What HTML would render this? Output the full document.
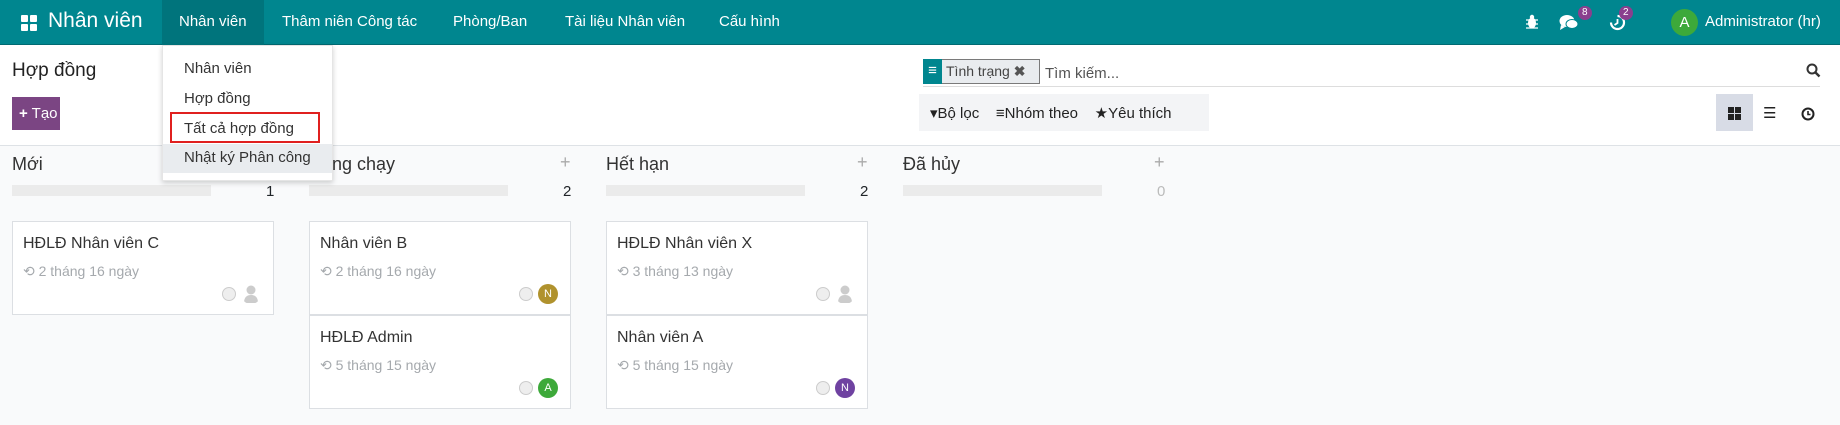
<!DOCTYPE html>
<html><head><meta charset="utf-8"><style>
*{box-sizing:border-box;margin:0;padding:0}
body{width:1840px;height:425px;overflow:hidden;font-family:"Liberation Sans",sans-serif;background:#f9fafb;color:#212529;position:relative}
.a{position:absolute;white-space:nowrap}
.nav{position:absolute;left:0;top:0;width:1840px;height:45px;background:#00868f;border-bottom:1px solid #006a72}
.nav .a{color:#fff;font-size:15px;top:13px}
.cp{position:absolute;left:0;top:45px;width:1840px;height:101px;background:#fff;border-bottom:1px solid #dee2e6}
.col{position:absolute;top:150px;width:262px}
.card{position:absolute;left:0;width:262px;height:94px;background:#fff;border:1px solid #dcdfe3}
.card .t{position:absolute;left:10px;top:13px;font-size:16px;color:#333}
.card .s{position:absolute;left:10px;top:41px;font-size:14px;color:#a5a9ad}
.dot{position:absolute;width:14px;height:14px;border-radius:50%;border:1px solid #ccc;background:#eee;top:65px;right:37px}
.av{position:absolute;width:20px;height:20px;border-radius:50%;top:62px;right:12px;color:#fff;font-size:11px;text-align:center;line-height:20px}
.badge{position:absolute;background:#8a3f8e;color:#fff;font-size:10px;border-radius:8px;padding:1px 4px;line-height:12px}
</style></head><body>
<div class="nav">
 <div class="a" style="left:21px;top:15px;width:16px;height:16px">
  <div style="position:absolute;left:0;top:0;width:7px;height:7px;background:#fff;border-radius:1px"></div><div style="position:absolute;left:9px;top:0;width:7px;height:7px;background:#fff;border-radius:1px"></div><div style="position:absolute;left:0;top:9px;width:7px;height:7px;background:#fff;border-radius:1px"></div><div style="position:absolute;left:9px;top:9px;width:7px;height:7px;background:#fff;border-radius:1px"></div></div>
 <div class="a" style="left:48px;top:9px;font-size:21px">Nhân viên</div>
 <div style="position:absolute;left:162px;top:0;width:102px;height:45px;background:#00747c"></div>
 <div class="a" style="left:179px">Nhân viên</div>
 <div class="a" style="left:282px">Thâm niên Công tác</div>
 <div class="a" style="left:453px">Phòng/Ban</div>
 <div class="a" style="left:565px">Tài liệu Nhân viên</div>
 <div class="a" style="left:719px">Cấu hình</div>
 <svg class="a" style="left:1526px;top:14px" width="12" height="16" viewBox="0 0 12 16"><ellipse cx="6" cy="9" rx="4" ry="5.5" fill="#fff"/><circle cx="6" cy="3" r="2.2" fill="#fff"/><path d="M0 6h12M0 10h12M0 14h12" stroke="#fff" stroke-width="1.3"/></svg>
 <svg class="a" style="left:1559px;top:14px" width="20" height="17" viewBox="0 0 20 17"><ellipse cx="8" cy="7" rx="7.5" ry="6" fill="#fff"/><path d="M2 11l-1 5 5-3z" fill="#fff"/><ellipse cx="13" cy="10" rx="6" ry="4.5" fill="#fff" stroke="#00868f" stroke-width="1"/></svg>
 <div class="badge" style="left:1578px;top:6px">8</div>
 <svg class="a" style="left:1609px;top:14px" width="17" height="17" viewBox="0 0 17 17"><path d="M8.5 2A6.5 6.5 0 1 1 2 8.5" fill="none" stroke="#fff" stroke-width="2.2"/><path d="M8.5 5v4l-3 2" fill="none" stroke="#fff" stroke-width="1.8"/></svg>
 <div class="badge" style="left:1619px;top:6px">2</div>
 <div class="a" style="left:1671px;top:9px;width:27px;height:27px;border-radius:50%;background:#3da93a;text-align:center;line-height:27px;font-size:15px">A</div>
 <div class="a" style="left:1705px">Administrator (hr)</div>
</div>
<div class="cp">
 <div class="a" style="left:12px;top:15px;font-size:19px;color:#222">Hợp đồng</div>
 <div class="a" style="left:12px;top:52px;width:48px;height:33px;background:#7b4583;color:#fff;font-size:15px;line-height:33px;padding-left:7px"><b>+</b> Tạo</div>
 <div class="a" style="left:923px;top:14px;width:897px;height:28px;border-bottom:1px solid #ddd"></div>
 <div class="a" style="left:923px;top:14px;width:117px;height:25px;border:1px solid #7a7a7a;background:#e9ecef"></div>
 <div class="a" style="left:923px;top:14px;width:19px;height:25px;background:#00868f;color:#fff;text-align:center;font-size:15px;line-height:24px">≡</div>
 <div class="a" style="left:946px;top:18px;font-size:14px;color:#444">Tình trạng <b style="color:#555">✖</b></div>
 <div class="a" style="left:1045px;top:20px;font-size:15px;color:#555">Tìm kiếm...</div>
 <svg class="a" style="left:1806px;top:18px" width="15" height="15" viewBox="0 0 15 15"><circle cx="6" cy="6" r="4.5" fill="none" stroke="#333" stroke-width="2"/><path d="M9.5 9.5l4 4" stroke="#333" stroke-width="2.4"/></svg>
 <div class="a" style="left:919px;top:49px;width:290px;height:37px;background:#f3f4f6"></div>
 <div class="a" style="left:930px;top:59px;font-size:15px;color:#222">▾Bộ lọc &nbsp;&nbsp; ≡Nhóm theo &nbsp;&nbsp; ★Yêu thích</div>
 <div class="a" style="left:1716px;top:49px;width:37px;height:37px;background:#d8dce6"></div>
 <div class="a" style="left:1728px;top:62px;width:13px;height:13px">
  <div style="position:absolute;left:0;top:0;width:6px;height:6px;background:#222"></div><div style="position:absolute;left:7px;top:0;width:6px;height:6px;background:#222"></div><div style="position:absolute;left:0;top:7px;width:6px;height:6px;background:#222"></div><div style="position:absolute;left:7px;top:7px;width:6px;height:6px;background:#222"></div></div>
 <div class="a" style="left:1763px;top:59px;font-size:15px;color:#222">☰</div>
 <svg class="a" style="left:1801px;top:62px" width="14" height="14" viewBox="0 0 14 14"><circle cx="7" cy="7" r="5.5" fill="none" stroke="#222" stroke-width="2"/><path d="M7 4v3.5H9.5" fill="none" stroke="#222" stroke-width="1.6"/></svg>
</div>
<div class="col" style="left:12px">
 <div class="a" style="left:0;top:4px;font-size:18px;color:#333">Mới</div>
 <div class="a" style="left:0;top:35px;width:199px;height:11px;background:#ebebeb"></div>
 <div class="a" style="left:254px;top:33px;font-size:15px">1</div>
 <div class="card" style="top:71px"><div class="t">HĐLĐ Nhân viên C</div><div class="s">⟲ 2 tháng 16 ngày</div><div class="dot"></div><svg class="av" viewBox="0 0 20 20"><circle cx="10" cy="6" r="4.5" fill="#ccc"/><path d="M3 19c0-6 3-8 7-8s7 2 7 8z" fill="#ccc"/></svg></div>
</div>
<div class="col" style="left:309px">
 <div class="a" style="left:0;top:4px;font-size:18px;color:#333">Đang chạy</div>
 <div class="a" style="left:251px;top:2px;font-size:18px;color:#aaa">+</div>
 <div class="a" style="left:0;top:35px;width:199px;height:11px;background:#ebebeb"></div>
 <div class="a" style="left:254px;top:33px;font-size:15px">2</div>
 <div class="card" style="top:71px"><div class="t">Nhân viên B</div><div class="s">⟲ 2 tháng 16 ngày</div><div class="dot"></div><div class="av" style="background:#b0922d">N</div></div>
 <div class="card" style="top:165px"><div class="t">HĐLĐ Admin</div><div class="s">⟲ 5 tháng 15 ngày</div><div class="dot"></div><div class="av" style="background:#3da93a">A</div></div>
</div>
<div class="col" style="left:606px">
 <div class="a" style="left:0;top:4px;font-size:18px;color:#333">Hết hạn</div>
 <div class="a" style="left:251px;top:2px;font-size:18px;color:#aaa">+</div>
 <div class="a" style="left:0;top:35px;width:199px;height:11px;background:#ebebeb"></div>
 <div class="a" style="left:254px;top:33px;font-size:15px">2</div>
 <div class="card" style="top:71px"><div class="t">HĐLĐ Nhân viên X</div><div class="s">⟲ 3 tháng 13 ngày</div><div class="dot"></div><svg class="av" viewBox="0 0 20 20"><circle cx="10" cy="6" r="4.5" fill="#ccc"/><path d="M3 19c0-6 3-8 7-8s7 2 7 8z" fill="#ccc"/></svg></div>
 <div class="card" style="top:165px"><div class="t">Nhân viên A</div><div class="s">⟲ 5 tháng 15 ngày</div><div class="dot"></div><div class="av" style="background:#6f42a1">N</div></div>
</div>
<div class="col" style="left:903px">
 <div class="a" style="left:0;top:4px;font-size:18px;color:#333">Đã hủy</div>
 <div class="a" style="left:251px;top:2px;font-size:18px;color:#aaa">+</div>
 <div class="a" style="left:0;top:35px;width:199px;height:11px;background:#ebebeb"></div>
 <div class="a" style="left:254px;top:33px;font-size:15px;color:#bbb">0</div>
</div>
<div class="a" style="left:162px;top:45px;width:171px;height:136px;background:#fff;box-shadow:0 2px 5px rgba(0,0,0,.18);border:1px solid #e5e5e5">
 <div class="a" style="left:21px;top:14px;font-size:15px;color:#333">Nhân viên</div>
 <div class="a" style="left:21px;top:44px;font-size:15px;color:#333">Hợp đồng</div>
 <div class="a" style="left:0;top:98px;width:169px;height:29px;background:#e9ecef"></div>
 <div class="a" style="left:21px;top:74px;font-size:15px;color:#333">Tất cả hợp đồng</div>
 <div class="a" style="left:7px;top:66px;width:150px;height:31px;border:2px solid #e0201f"></div>
 <div class="a" style="left:21px;top:103px;font-size:15px;color:#333">Nhật ký Phân công</div>
</div>
</body></html>
